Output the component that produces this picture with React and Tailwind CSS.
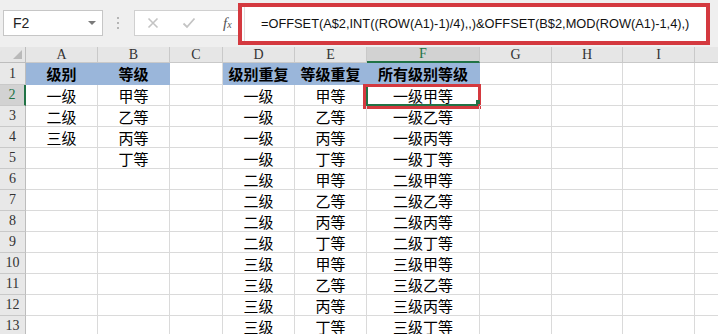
import React from 'react';

// 列定义：宽度与表头字母
const COLS = [
  { k: 'A', w: 'w-[72px]' },
  { k: 'B', w: 'w-[72px]' },
  { k: 'C', w: 'w-[53px]' },
  { k: 'D', w: 'w-[72px]' },
  { k: 'E', w: 'w-[72px]' },
  { k: 'F', w: 'w-[113px]' },
  { k: 'G', w: 'w-[72px]' },
  { k: 'H', w: 'w-[71px]' },
  { k: 'I', w: 'w-[72px]' },
  { k: '', w: 'w-[40px]' },
];

const LV = ['一级', '二级', '三级'];
const GR = ['甲等', '乙等', '丙等', '丁等'];

const ROWS = [
  ['级别', '等级', '', '级别重复', '等级重复', '所有级别等级'],
  ...Array.from({ length: 12 }, (_, i) => {
    const a = LV[i] || '';
    const b = GR[i] || '';
    const d = LV[Math.floor(i / 4)];
    const e = GR[i % 4];
    return [a, b, '', d, e, d + e];
  }),
];

const HEAD_FILL = [0, 1, 3, 4, 5];

function ColHeader({ col, selected }) {
  return (
    <div
      className={`${col.w} shrink-0 h-full flex items-center justify-center border-r border-[#c9c9c9] text-[14px] leading-none ${
        selected
          ? 'bg-[#d2d2d2] text-[#217346] border-b-2 border-b-[#217346]'
          : 'text-[#333] border-b border-b-[#c9c9c9]'
      }`}
    >
      {col.k}
    </div>
  );
}

function Row({ n, cells }) {
  const first = n === 1;
  const sel = n === 2;
  return (
    <div className={`flex ${first ? 'h-[22px]' : 'h-[21px]'} shrink-0`}>
      <div
        className={`w-[26px] shrink-0 flex items-center justify-center border-b border-[#c9c9c9] text-[14px] leading-none font-['Liberation_Serif',serif] ${
          sel
            ? 'bg-[#d2d2d2] text-[#217346] border-r-2 border-r-[#217346]'
            : 'bg-[#e8e8e8] text-[#333] border-r border-r-[#bdbdbd]'
        }`}
      >
        {n}
      </div>
      {COLS.map((c, i) => {
        const txt = cells[i] || '';
        const fill = first && HEAD_FILL.includes(i);
        const active = sel && i === 5;
        return (
          <div
            key={i}
            className={`${c.w} shrink-0 relative flex items-center justify-center border-r border-b text-[15px] leading-none ${
              fill ? 'bg-[#9ab6da] border-[#9ab6da] font-bold' : 'border-[#dadada]'
            }`}
          >
            {txt}
            {active && (
              <>
                <div className="absolute inset-[-1px] border-2 border-[#217346]" />
                <div className="absolute -left-[4px] -right-[2px] -top-[1px] -bottom-[4px] border-[3px] border-[#d4393f]" />
                <div className="absolute right-[-1px] bottom-[1px] w-[4px] h-[4px] bg-[#217346]" />
              </>
            )}
          </div>
        );
      })}
    </div>
  );
}

export default function App() {
  return (
    <div className="w-[718px] h-[334px] overflow-hidden bg-white flex flex-col font-['Noto_Sans_CJK_SC',sans-serif] text-black">
      {/* 编辑栏 */}
      <div className="h-[47px] shrink-0 bg-[#efefef] flex items-start">
        <div className="ml-[3px] mt-[10px] w-[100px] h-[26px] bg-white border border-[#c6c6c6] flex items-center pl-[9px] pr-[6px] font-['Liberation_Sans',sans-serif] text-[14px] text-[#222]">
          <span className="flex-1">F2</span>
          <span className="w-0 h-0 border-l-[4px] border-r-[4px] border-t-[4px] border-l-transparent border-r-transparent border-t-[#7a7a7a]" />
        </div>
        <div className="ml-[14px] mt-[17px] flex flex-col gap-[3px]">
          <span className="w-[2px] h-[2px] bg-[#b5b5b5]" />
          <span className="w-[2px] h-[2px] bg-[#b5b5b5]" />
          <span className="w-[2px] h-[2px] bg-[#b5b5b5]" />
        </div>
        <div className="ml-[15px] mt-[10px] w-[104px] h-[26px] bg-white border border-[#d0d0d0] border-r-0 flex items-center">
          <svg className="ml-[12px]" width="12" height="12" viewBox="0 0 12 12">
            <path d="M1.5 1.5L10.5 10.5M10.5 1.5L1.5 10.5" stroke="#c4c4c4" strokeWidth="1.6" />
          </svg>
          <svg className="ml-[23px]" width="14" height="12" viewBox="0 0 14 12">
            <path d="M1.5 6.5L5 10L12.5 1.5" stroke="#c4c4c4" strokeWidth="1.8" fill="none" />
          </svg>
          <span className="ml-[27px] font-['Liberation_Serif',serif] italic text-[15px] text-[#555] leading-none">
            f<span className="text-[10px]">x</span>
          </span>
        </div>
        <div className="mt-[3px] w-[472px] h-[42px] border-[4px] border-[#d4393f] bg-white flex items-center">
          <div className="h-full w-[3px] border-r border-[#e0e0e0]" />
          <span className="ml-[16px] font-['Liberation_Sans',sans-serif] text-[12.8px] whitespace-nowrap text-[#111]">
            =OFFSET(A$2,INT((ROW(A1)-1)/4),,)&amp;OFFSET(B$2,MOD(ROW(A1)-1,4),)
          </span>
        </div>
      </div>

      {/* 列标题 */}
      <div className="h-[16px] shrink-0 flex bg-[#e6e6e6] font-['Liberation_Serif',serif]">
        <div className="w-[26px] shrink-0 h-full flex items-end justify-end pr-[3px] pb-[3px] border-r border-b border-[#bdbdbd]">
          <svg width="9" height="9" viewBox="0 0 9 9">
            <path d="M9 0V9H0Z" fill="#b9b9b9" />
          </svg>
        </div>
        {COLS.map((c, i) => (
          <ColHeader key={i} col={c} selected={i === 5} />
        ))}
      </div>

      {/* 表格 */}
      {ROWS.map((r, i) => (
        <Row key={i} n={i + 1} cells={r} />
      ))}
    </div>
  );
}
